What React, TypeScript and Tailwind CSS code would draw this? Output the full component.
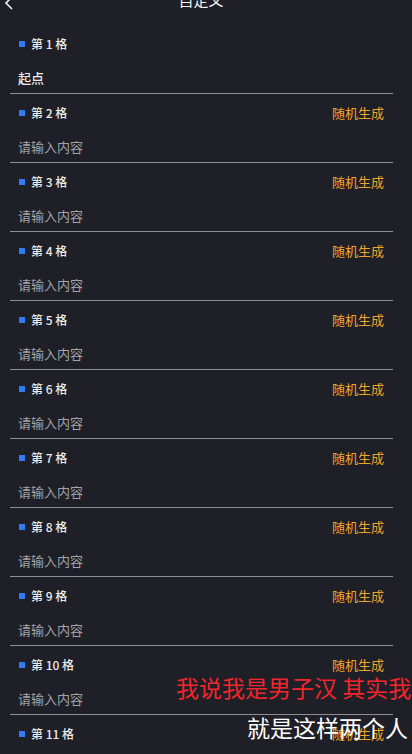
import React from "react";

const cells = Array.from({ length: 11 }, (_, i) => i + 1);

const Cell = ({ n }: { n: number }) => {
  const first = n === 1;
  return (
    <div className="border-b border-[#8e8e93]">
      <div className="h-[38px] flex items-center justify-between px-[9px]">
        <div className="flex items-center gap-[6px]">
          <span className="w-[6px] h-[6px] bg-[#2f7cf6]" />
          <span className="text-[12px] font-medium text-[#ececec]">第 {n} 格</span>
        </div>
        {!first && <span className="text-[13px] text-[#f0a52b]">随机生成</span>}
      </div>
      <div className="h-[30px] flex items-center px-[8px]">
        {first ? (
          <span className="text-[13px] font-medium text-[#ececec]">起点</span>
        ) : (
          <span className="text-[13px] text-[#a3a3a8]">请输入内容</span>
        )}
      </div>
    </div>
  );
};

export default function App() {
  return (
    <div
      className="relative w-[412px] h-[754px] overflow-hidden bg-[#1f1f27]"
      style={{ fontFamily: '"Noto Sans CJK SC", "Noto Sans", sans-serif' }}
    >
      <div className="relative h-[25px] flex justify-center pr-[10px]">
        <svg className="absolute left-[4px] -top-[3px]" width="10" height="13" viewBox="0 0 10 13" fill="none">
          <path d="M8 0 L2 6 L8 12" stroke="#f2f2f2" strokeWidth="1.6" />
        </svg>
        <div className="-mt-[10px] h-[20px] text-[15px] leading-[20px] text-[#f2f2f2]">自定义</div>
      </div>
      <div className="ml-[10px] w-[383px]">
        {cells.map((n) => (
          <Cell key={n} n={n} />
        ))}
      </div>
      <div className="absolute left-[176px] top-[672px] whitespace-nowrap text-[23px] leading-[30px] text-[#f2262d]">
        我说我是男子汉 其实我
      </div>
      <div className="absolute left-[247px] top-[711px] whitespace-nowrap text-[23px] leading-[32px] text-white">
        就是这样两个人
      </div>
    </div>
  );
}
